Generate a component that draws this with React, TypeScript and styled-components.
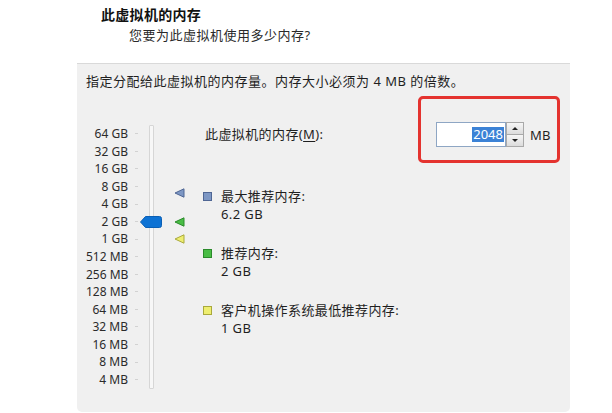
import styled, { createGlobalStyle } from 'styled-components';

const GlobalStyle = createGlobalStyle`
  html, body { margin: 0; padding: 0; background: #ffffff; }
  body {
    font-family: "Noto Sans", "Noto Sans CJK SC", sans-serif;
    color: #1f1f1f;
    -webkit-font-smoothing: antialiased;
  }
`;

const Page = styled.div`
  width: 612px;
  height: 413px;
  overflow: hidden;
`;

const Header = styled.div`
  height: 63px;
  box-sizing: border-box;
  padding: 6px 0 0 101px;
`;

const Title = styled.div`
  font-size: 14px;
  font-weight: 700;
  line-height: 18px;
  letter-spacing: 0.3px;
  color: #111;
`;

const Subtitle = styled.div`
  margin: 2px 0 0 28px;
  font-size: 13px;
  line-height: 18px;
  letter-spacing: 0.5px;
  color: #2a2a2a;
`;

const Panel = styled.div`
  margin-left: 77px;
  width: 493px;
  height: 349px;
  box-sizing: border-box;
  background: #f0f0f0;
  border-top: 1px solid #d9d9d9;
  border-radius: 0 0 5px 5px;
  padding-left: 9px;
`;

const Intro = styled.div`
  margin-top: 8px;
  font-size: 13px;
  line-height: 18px;
  letter-spacing: 0.5px;
`;

const Body = styled.div`
  display: flex;
  align-items: flex-start;
  margin-top: 6px;
`;

const Scale = styled.div`
  position: relative;
  display: flex;
  width: 117px;
  height: 264px;
  margin-top: 29px;
  flex-shrink: 0;
`;

const LabelCol = styled.div`
  display: flex;
  flex-direction: column;
  width: 42px;
`;

const ScaleLabel = styled.div`
  height: 17.57px;
  line-height: 17.57px;
  font-size: 12px;
  text-align: right;
  white-space: nowrap;
  color: #2b2b2b;
`;

const TickCol = styled.div`
  display: flex;
  flex-direction: column;
  margin-left: 7px;
  width: 3px;
`;

const Tick = styled.div`
  height: 17.57px;
  display: flex;
  align-items: center;
  &::after {
    content: '';
    width: 3px;
    height: 1px;
    background: #d2d2d2;
  }
`;

const Track = styled.div`
  margin: 0 0 0 11px;
  width: 3px;
  height: 262px;
  background: #f7f7f7;
  border: 1px solid #d6d6d6;
  border-radius: 1px;
`;

const Marker = styled.div<{ $left: number }>`
  position: absolute;
  left: ${p => p.$left}px;
  line-height: 0;
`;

const Details = styled.div`
  display: flex;
  flex-direction: column;
  width: 357px;
`;

const MemoryRow = styled.div`
  display: flex;
  justify-content: space-between;
  align-items: flex-start;
`;

const MemoryLabel = styled.div`
  margin: 29px 0 0 2px;
  font-size: 13px;
  line-height: 18px;
  letter-spacing: 0.4px;
  u { text-decoration: underline; text-underline-offset: 2px; }
`;

const Highlight = styled.div`
  display: flex;
  align-items: center;
  width: 142px;
  height: 67px;
  box-sizing: border-box;
  border: 3px solid #e4332f;
  border-radius: 5px;
  padding: 20px 0 10px 15px;
`;

const SpinInput = styled.div`
  width: 70px;
  height: 25px;
  box-sizing: border-box;
  border: 1px solid #8ea6c4;
  background: #ffffff;
  display: flex;
  align-items: center;
  justify-content: flex-end;
  padding-right: 1px;
`;

const Selected = styled.span`
  background: #3b82d6;
  color: #ffffff;
  font-size: 13px;
  line-height: 15px;
  padding: 0 1px;
`;

const SpinButtons = styled.div`
  display: flex;
  flex-direction: column;
  width: 18px;
  height: 25px;
`;

const SpinButton = styled.div<{ $up?: boolean }>`
  flex: 1;
  display: flex;
  align-items: center;
  justify-content: center;
  background: linear-gradient(#f6f6f6, #dcdcdc);
  border: 1px solid #a9a9a9;
  border-top-width: ${p => (p.$up ? '1px' : '0')};
  &::after {
    content: '';
    border-left: 3px solid transparent;
    border-right: 3px solid transparent;
    ${p => (p.$up ? 'border-bottom: 3px solid #222;' : 'border-top: 3px solid #222;')}
  }
`;

const Unit = styled.span`
  margin-left: 6px;
  font-size: 13px;
  letter-spacing: 0.3px;
`;

const Legend = styled.div`
  display: flex;
  flex-direction: column;
  gap: 21px;
  margin-top: 24px;
`;

const LegendItem = styled.div`
  display: grid;
  grid-template-columns: 18px auto;
  font-size: 13px;
  line-height: 18px;
  letter-spacing: 0.4px;
`;

const Swatch = styled.div<{ $fill: string; $edge: string }>`
  width: 7px;
  height: 7px;
  margin-top: 5px;
  background: ${p => p.$fill};
  border: 1px solid ${p => p.$edge};
`;

const ValueText = styled.div`
  grid-column: 2;
`;

const scaleLabels = [
  '64 GB', '32 GB', '16 GB', '8 GB', '4 GB', '2 GB', '1 GB', '512 MB',
  '256 MB', '128 MB', '64 MB', '32 MB', '16 MB', '8 MB', '4 MB',
];

const STEP = 17.57;
const posFor = (mb: number) => 9 + (16 - Math.log2(mb)) * STEP;

const markers = [
  { mb: 6348.8, fill: '#7d97c4', edge: '#4f6694', label: '最大推荐内存:', value: '6.2 GB' },
  { mb: 2048, fill: '#49bd45', edge: '#2b8a2b', label: '推荐内存:', value: '2 GB' },
  { mb: 1024, fill: '#eeee70', edge: '#a9a93c', label: '客户机操作系统最低推荐内存:', value: '1 GB' },
];

const Triangle = ({ fill, edge }: { fill: string; edge: string }) => (
  <svg width="11" height="10" viewBox="0 0 11 10">
    <polygon points="1,5 10,0.8 10,9.2" fill={fill} stroke={edge} strokeWidth="1" strokeLinejoin="round" />
  </svg>
);

const Thumb = () => (
  <svg width="22" height="12" viewBox="0 0 22 12">
    <path d="M0.5 6 L5.5 0.5 H19.5 Q21.5 0.5 21.5 2.5 V9.5 Q21.5 11.5 19.5 11.5 H5.5 Z" fill="#0d72d4" stroke="#0a5fb4" strokeWidth="1" />
  </svg>
);

export default function App() {
  const current = 2048;

  return (
    <Page>
      <GlobalStyle />
      <Header>
        <Title>此虚拟机的内存</Title>
        <Subtitle>您要为此虚拟机使用多少内存?</Subtitle>
      </Header>
      <Panel>
        <Intro>指定分配给此虚拟机的内存量。内存大小必须为 4 MB 的倍数。</Intro>
        <Body>
          <Scale>
            <LabelCol>
              {scaleLabels.map(l => <ScaleLabel key={l}>{l}</ScaleLabel>)}
            </LabelCol>
            <TickCol>
              {scaleLabels.map(l => <Tick key={l} />)}
            </TickCol>
            <Track />
            <Marker $left={54} style={{ top: posFor(current) - 6 }}>
              <Thumb />
            </Marker>
            {markers.map(m => (
              <Marker key={m.label} $left={88} style={{ top: posFor(m.mb) - 5 }}>
                <Triangle fill={m.fill} edge={m.edge} />
              </Marker>
            ))}
          </Scale>
          <Details>
            <MemoryRow>
              <MemoryLabel>此虚拟机的内存(<u>M</u>):</MemoryLabel>
              <Highlight>
                <SpinInput>
                  <Selected>2048</Selected>
                </SpinInput>
                <SpinButtons>
                  <SpinButton $up />
                  <SpinButton />
                </SpinButtons>
                <Unit>MB</Unit>
              </Highlight>
            </MemoryRow>
            <Legend>
              {markers.map(m => (
                <LegendItem key={m.label}>
                  <Swatch $fill={m.fill} $edge={m.edge} />
                  <div>{m.label}</div>
                  <ValueText>{m.value}</ValueText>
                </LegendItem>
              ))}
            </Legend>
          </Details>
        </Body>
      </Panel>
    </Page>
  );
}
